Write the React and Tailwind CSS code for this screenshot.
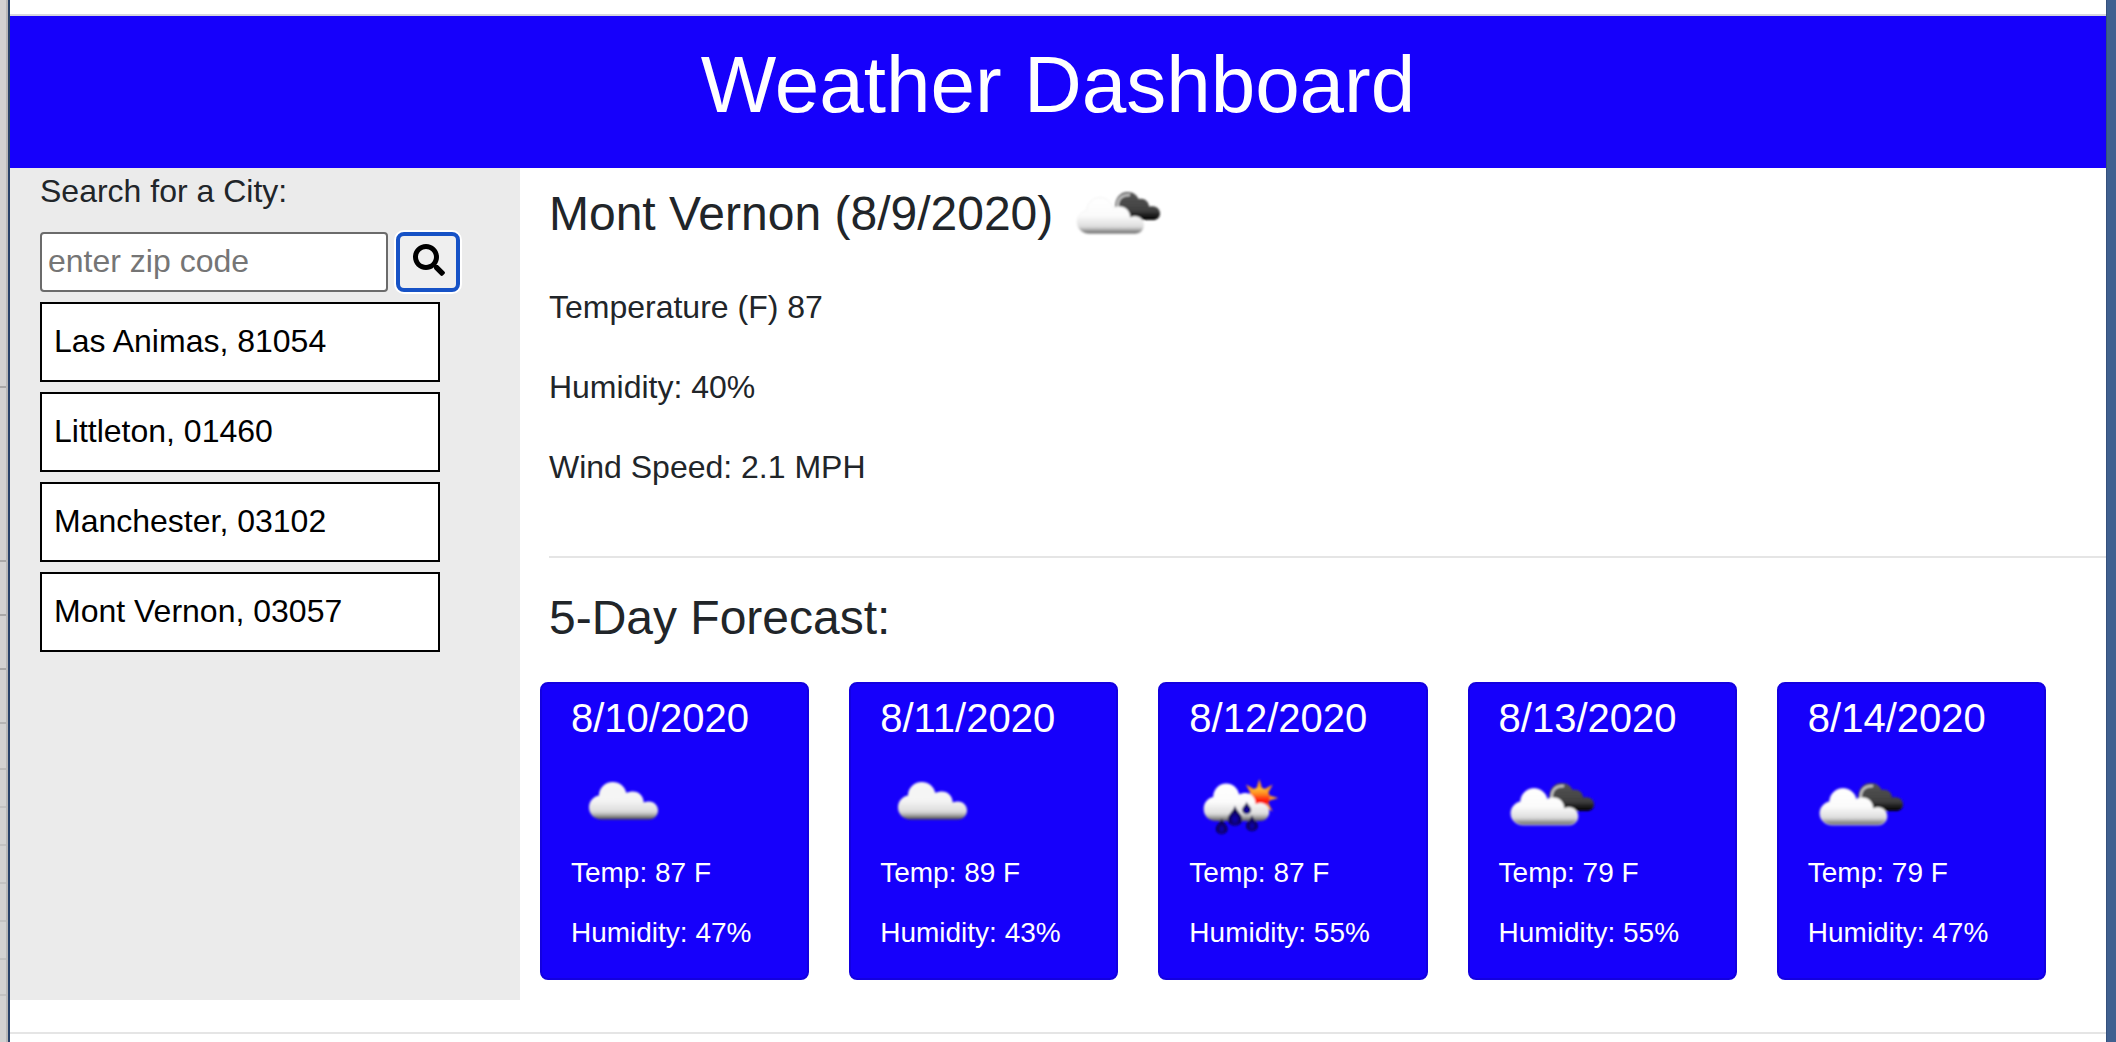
import { FaSearch } from "react-icons/fa";

const cities = [
  "Las Animas, 81054",
  "Littleton, 01460",
  "Manchester, 03102",
  "Mont Vernon, 03057",
];

const forecast = [
  { date: "8/10/2020", icon: "cloudy", temp: 87, humidity: 47 },
  { date: "8/11/2020", icon: "cloudy", temp: 89, humidity: 43 },
  { date: "8/12/2020", icon: "rain", temp: 87, humidity: 55 },
  { date: "8/13/2020", icon: "broken", temp: 79, humidity: 55 },
  { date: "8/14/2020", icon: "broken", temp: 79, humidity: 47 },
];

// Heights of the rows of the window that lies behind, seen at the left edge
const backRows = [
  "h-[388px] border-[#a8a8a8]",
  "h-[174px] border-[#a8a8a8]",
  "h-[54px] border-[#a8a8a8]",
  "h-[54px] border-[#a8a8a8]",
  "h-[54px] border-[#b4b4b4]",
  "h-[46px] border-[#bcbcbc]",
  "h-[38px] border-[#c2c2c2]",
  "h-[38px] border-[#c2c2c2]",
  "h-[38px] border-[#c2c2c2]",
  "h-[38px] border-[#c2c2c2]",
  "h-[38px] border-[#c2c2c2]",
  "h-[36px] border-[#c2c2c2]",
];

function IconDefs() {
  return (
    <svg className="absolute size-0" aria-hidden="true">
      <defs>
        <linearGradient id="light" gradientUnits="userSpaceOnUse" x1="0" y1="32" x2="0" y2="69.5">
          <stop offset="0" stopColor="#f6f6f6" />
          <stop offset="0.5" stopColor="#f4f4f4" />
          <stop offset="0.78" stopColor="#dcdcdc" />
          <stop offset="0.86" stopColor="#b8b8b8" />
          <stop offset="1" stopColor="#4a4a4a" />
        </linearGradient>
        <linearGradient id="white" gradientUnits="userSpaceOnUse" x1="0" y1="32" x2="0" y2="69.5">
          <stop offset="0" stopColor="#ffffff" />
          <stop offset="0.5" stopColor="#fbfbfb" />
          <stop offset="0.8" stopColor="#dddddd" />
          <stop offset="0.88" stopColor="#b0b0b0" />
          <stop offset="1" stopColor="#5a5a5a" />
        </linearGradient>
        <linearGradient id="dark" gradientUnits="userSpaceOnUse" x1="0" y1="33" x2="0" y2="61">
          <stop offset="0" stopColor="#565656" />
          <stop offset="0.65" stopColor="#404040" />
          <stop offset="1" stopColor="#000000" />
        </linearGradient>
        <linearGradient id="sun" x1="0" y1="0" x2="0" y2="1">
          <stop offset="0" stopColor="#ffc83a" />
          <stop offset="0.3" stopColor="#ff8a20" />
          <stop offset="0.6" stopColor="#ff1c10" />
          <stop offset="1" stopColor="#f01010" />
        </linearGradient>
        <radialGradient id="drop" cx="0.5" cy="0.68" r="0.5">
          <stop offset="0" stopColor="#1200b8" />
          <stop offset="1" stopColor="#05003c" />
        </radialGradient>
        <filter id="soft" x="-10%" y="-10%" width="120%" height="120%">
          <feGaussianBlur stdDeviation="0.8" />
        </filter>
        <path
          id="cloud"
          d="M30.5 69.5C23.500 69.500 18 64.500 18 57.500C18 51.500 22 46.800 28 45.600C28 38 34 32 41.700 32C48.500 32 54 36.500 55.400 43C57.300 42 59.500 41.500 62 41.500C68 41.500 72.700 46.200 72.700 52.600C74.300 51.900 76 51.600 78 51.600C83.200 51.600 87 55.600 87 60.600C87 65.600 83.200 69.500 78 69.500Z"
        />
      </defs>
    </svg>
  );
}

function BrokenClouds() {
  return (
    <g filter="url(#soft)">
      <path
        fill="url(#dark)"
        d="M50 49C50 39 55 33 62.700 33C68 33 72 35.800 73.600 40C79 38.500 83.600 41.800 84.200 47.800C90 46 95 49.500 95 54.500C95 58.500 92 61 88 61H60Z"
      />
      <path d="M52.500 48C52.500 39.500 57 35.600 65 36" fill="none" stroke="#c4c4c4" strokeWidth="2.600" />
      <use
        href="#cloud"
        fill="url(#white)"
        stroke="#efefef"
        strokeWidth="0.800"
        transform="translate(-5.500 7.500) scale(0.970)"
      />
    </g>
  );
}

const rays = [0, 45, 90, 135, 180, 225, 270, 315];
const drops = [
  [46, 55.5, 1.3],
  [57.7, 51.5, 0.82],
  [32.700, 68, 1.05],
  [63, 65, 1.05],
];

function SunRain() {
  return (
    <g filter="url(#soft)">
      {rays.map((angle) => (
        <path
          key={angle}
          d="M70.300 29L73.600 40H67Z"
          fill="#f5962c"
          transform={`rotate(${angle} 70.300 48)`}
        />
      ))}
      <circle cx="70.300" cy="48" r="10.500" fill="url(#sun)" />
      <use href="#cloud" fill="url(#white)" transform="translate(-2.400 1.500) scale(0.950 1)" />
      {drops.map(([x, y, s]) => (
        <path
          key={x}
          d="M0 0C0.800 4 5.500 6.500 5.500 10.500C5.500 13.500 3 15.500 0 15.500C-3 15.500 -5.500 13.500 -5.500 10.500C-5.500 6.500 -0.800 4 0 0Z"
          fill="url(#drop)"
          transform={`translate(${x} ${y}) scale(${s})`}
        />
      ))}
    </g>
  );
}

function WeatherIcon({ kind }) {
  const labels = { cloudy: "Cloudy", rain: "Rain and sun", broken: "Broken clouds" };
  return (
    <svg viewBox="0 20 100 70" className="h-[70px] w-[100px] shrink-0" role="img" aria-label={labels[kind]}>
      {kind === "cloudy" && <use href="#cloud" fill="url(#light)" filter="url(#soft)" />}
      {kind === "broken" && <BrokenClouds />}
      {kind === "rain" && <SunRain />}
    </svg>
  );
}

function Sidebar() {
  return (
    <aside className="w-[24.33%] shrink-0 bg-[#ebebeb] pl-[30px]">
      <form onSubmit={(e) => e.preventDefault()}>
        <label htmlFor="zip" className="mb-[18px] block text-[32px] leading-[46px]">
          Search for a City:
        </label>
        <div className="flex gap-2">
          <input
            id="zip"
            type="text"
            placeholder="enter zip code"
            className="h-[60px] w-[348px] rounded-[4px] border-2 border-[#6b6b6b] bg-white px-[6px] pb-[2px] text-[32px] text-black placeholder:text-[#757575]"
          />
          <button
            type="submit"
            aria-label="Search"
            className="flex h-[60px] w-16 items-center justify-center rounded-lg border-4 border-[#1652c6] bg-[#efefef] pb-1 pl-[2px] text-[32px] text-black ring-2 ring-white"
          >
            <FaSearch />
          </button>
        </div>
      </form>
      <ul className="mt-[10px] flex w-[400px] flex-col gap-[10px]">
        {cities.map((city) => (
          <li key={city}>
            <button
              type="button"
              className="h-20 w-full border-2 border-black bg-white px-3 pb-[2px] text-left text-[32px] leading-[48px] text-black"
            >
              {city}
            </button>
          </li>
        ))}
      </ul>
    </aside>
  );
}

function ForecastCard({ day }) {
  return (
    <li className="rounded-lg border-2 border-[#1300df] bg-[#1600fb] px-[29px] pt-[10px] pb-6 text-white">
      <h3 className="text-[40px] leading-[48px]">{day.date}</h3>
      <div className="mt-7 mb-3">
        <WeatherIcon kind={day.icon} />
      </div>
      <p className="mb-[18px] text-[28px] leading-[42px]">Temp: {day.temp} F</p>
      <p className="text-[28px] leading-[42px]">Humidity: {day.humidity}%</p>
    </li>
  );
}

export default function App() {
  return (
    <div className="flex min-h-screen bg-white font-['Liberation_Sans',Arial,sans-serif] text-[#212529]">
      <IconDefs />
      <div className="w-2 shrink-0 border-r-2 border-[#b8b8b8] bg-[#d2d2d2]" aria-hidden="true">
        {backRows.map((row, i) => (
          <div key={i} className={`border-b-2 ${row}`} />
        ))}
      </div>
      <div className="min-w-0 flex-1 border-l-2 border-[#28426a]">
        <div className="h-4 border-b-2 border-[#d6d6de]" />
        <header className="bg-[#1600fb] pt-[21px] pb-[35px] text-center text-white">
          <h1 className="text-[80px] leading-[96px]">Weather Dashboard</h1>
        </header>
        <div className="flex">
          <Sidebar />
          <main className="min-w-0 flex-1 pb-5">
            <section className="pt-[11px] pl-[29px]">
              <div className="mb-[34px] flex items-center gap-3">
                <h2 className="text-5xl leading-[58px]">Mont Vernon (8/9/2020)</h2>
                <WeatherIcon kind="broken" />
              </div>
              <div className="flex flex-col gap-8 text-[32px] leading-[48px]">
                <p>Temperature (F) 87</p>
                <p>Humidity: 40%</p>
                <p>Wind Speed: 2.1 MPH</p>
              </div>
              <hr className="mt-[65px] mb-[31px] border-t-2 border-[#e5e5e5]" />
              <h2 className="text-5xl leading-[58px]">5-Day Forecast:</h2>
            </section>
            <ul className="mt-[35px] grid grid-cols-5 gap-10 pr-[60px] pl-5">
              {forecast.map((day) => (
                <ForecastCard key={day.date} day={day} />
              ))}
            </ul>
          </main>
        </div>
        <hr className="mt-8 border-t-2 border-[#e5e5e5]" />
      </div>
      <div className="w-[10px] shrink-0 border-l border-[#35507c] bg-[#406090]" aria-hidden="true" />
    </div>
  );
}
